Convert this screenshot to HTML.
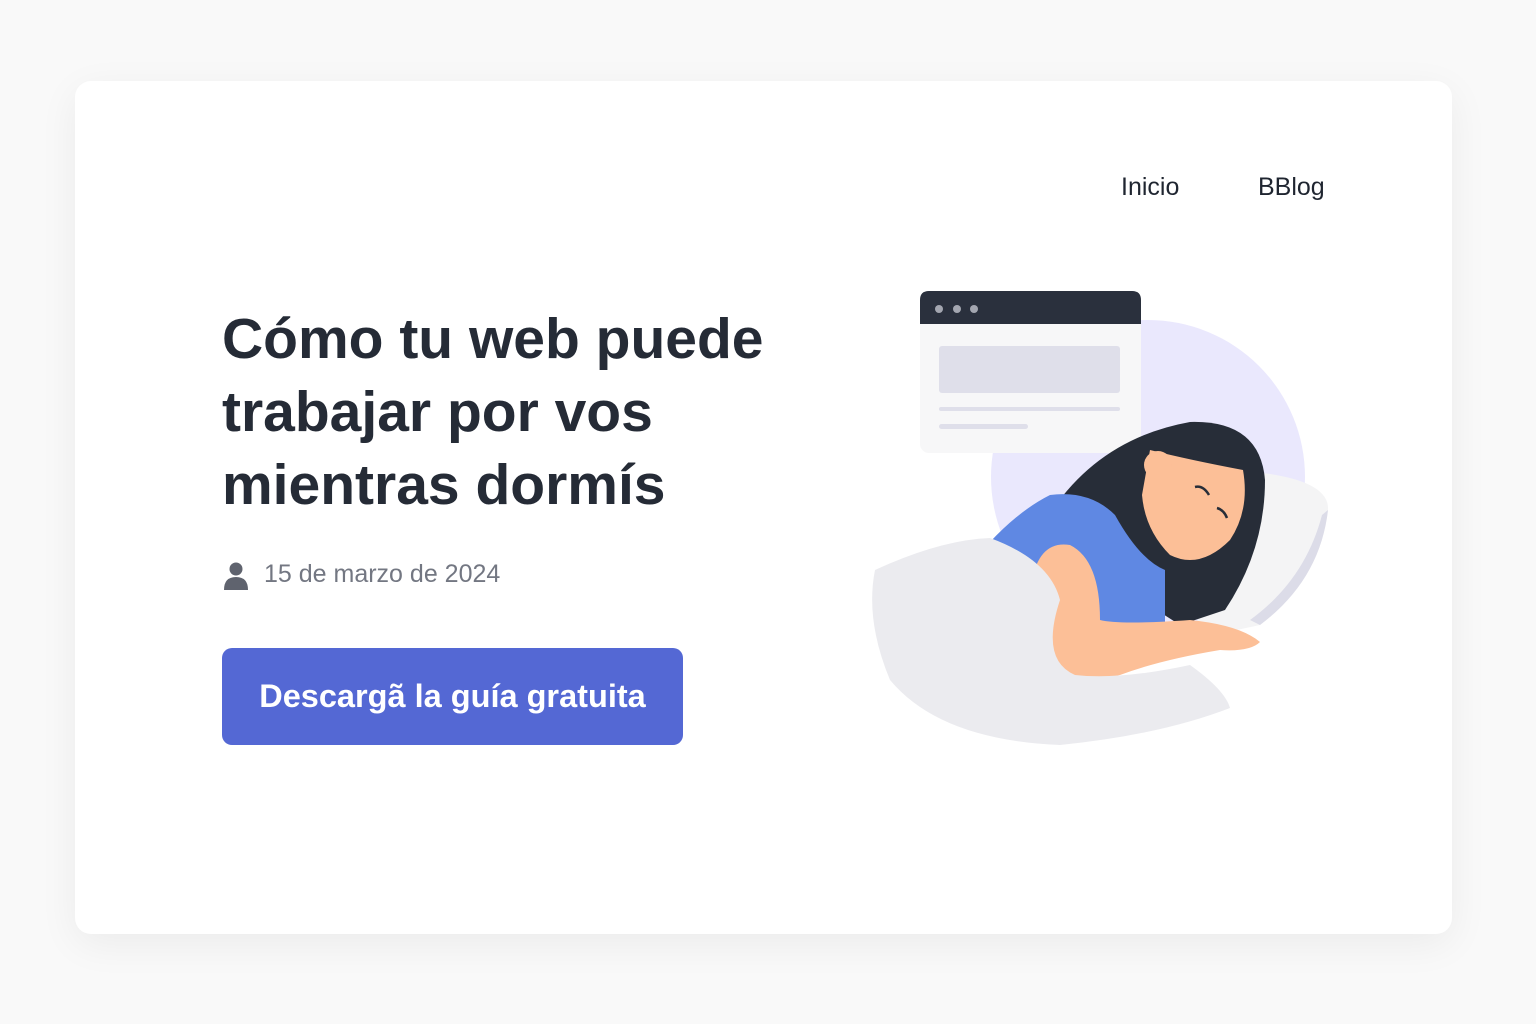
<!DOCTYPE html>
<html><head><meta charset="utf-8"><style>
*{margin:0;padding:0;box-sizing:border-box}
body{width:1536px;height:1024px;background:#f9f9f9;font-family:"Liberation Sans",sans-serif;position:relative;overflow:hidden}
.card{position:absolute;left:75px;top:81px;width:1377px;height:853px;background:#fff;border-radius:16px;box-shadow:0 10px 40px rgba(0,0,0,0.06)}
.nav{position:absolute;top:173px;font-size:25px;color:#1f2530}
h1{position:absolute;left:222px;top:303px;font-size:57px;line-height:73px;font-weight:bold;color:#252b36;letter-spacing:0;width:600px}
.meta{position:absolute;left:264px;top:560px;font-size:25px;color:#737782}
.btn{position:absolute;left:222px;top:648px;width:461px;height:97px;background:#5468d4;border-radius:10px;color:#fff;font-size:32.5px;font-weight:bold;text-align:center;line-height:97px}
</style></head><body>
<div class="card"></div>
<div class="nav" style="left:1121px">Inicio</div>
<div class="nav" style="left:1258px">BBlog</div>
<h1>Cómo tu web puede trabajar por vos mientras dormís</h1>
<svg style="position:absolute;left:223px;top:561px" width="26" height="30" viewBox="0 0 26 30"><circle cx="13" cy="8" r="6.5" fill="#5f636e"/><path d="M1 29 Q1 16 13 16 Q25 16 25 29 Z" fill="#5f636e"/></svg>
<div class="meta">15 de marzo de 2024</div>
<div class="btn">Descargã la guía gratuita</div>
<svg style="position:absolute;left:860px;top:280px" width="480" height="480" viewBox="0 0 480 480">
<circle cx="288" cy="197" r="157" fill="#eae8fd"/>
<rect x="60" y="11" width="221" height="162" rx="9" fill="#f7f7f8"/>
<path d="M60 44 V20 Q60 11 69 11 H272 Q281 11 281 20 V44 Z" fill="#2a303d"/>
<circle cx="79" cy="29" r="4" fill="#a3a6b0"/><circle cx="97" cy="29" r="4" fill="#a3a6b0"/><circle cx="114" cy="29" r="4" fill="#a3a6b0"/>
<rect x="79" y="66" width="181" height="47" rx="3" fill="#dfdfea"/>
<rect x="79" y="127" width="181" height="4" rx="2" fill="#dfdfea"/>
<rect x="79" y="144" width="89" height="5" rx="2.5" fill="#dfdfea"/>
<path d="M395 192 Q470 200 468 230 Q460 300 400 345 L330 360 Z" fill="#f4f4f5"/>
<path d="M468 230 Q460 300 400 345 L390 340 Q445 300 462 235 Z" fill="#dcdce8"/>
<path d="M180 250 Q230 160 330 142 Q400 140 405 200 Q405 270 365 330 L320 345 L250 300 Z" fill="#272d38"/>
<path d="M290 170 Q330 180 383 190 Q390 230 370 260 Q340 290 310 275 Q285 250 282 215 Z" fill="#fcbf97"/>
<circle cx="298" cy="185" r="14" fill="#fcbf97"/>
<path d="M335 207 q8 -2 14 8 M357 228 q7 2 10 10" stroke="#272d38" stroke-width="2.5" fill="none"/>
<path d="M130 262 Q160 230 190 215 Q230 210 255 235 Q280 280 305 290 L305 350 L240 350 L190 300 Z" fill="#5f88e3"/>
<path d="M172 300 Q180 260 210 265 Q240 280 240 340 Q260 345 330 340 Q380 345 400 362 Q390 372 360 370 Q300 380 260 395 Q195 410 180 380 Z" fill="#fcbf97"/>
<path d="M15 290 Q80 260 130 258 Q190 280 200 320 Q180 380 215 395 Q260 400 330 385 Q365 410 370 428 Q300 455 200 465 Q80 460 30 400 Q5 340 15 290 Z" fill="#ebebef"/>
</svg>
</body></html>
